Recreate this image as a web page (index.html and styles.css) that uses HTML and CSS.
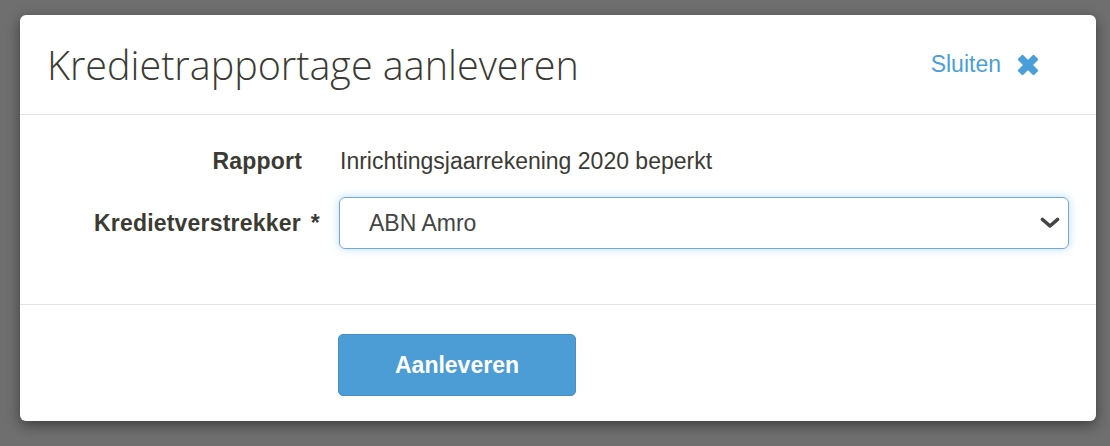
FILE: index.html
```html
<!DOCTYPE html>
<html lang="nl">
<head>
<meta charset="utf-8">
<title>Kredietrapportage aanleveren</title>
<link rel="stylesheet" href="styles.css">
</head>
<body>
<div class="modal">
  <header class="modal-header">
    <h1 class="modal-title">Kredietrapportage aanleveren</h1>
    <a class="close-link" href="#">Sluiten
      <svg class="close-icon" viewBox="0 0 26 26" width="26" height="26" aria-hidden="true">
        <path d="M4 7.5 L7.5 4 L13 9.5 L18.5 4 L22 7.5 L16.5 13 L22 18.5 L18.5 22 L13 16.5 L7.5 22 L4 18.5 L9.5 13 Z" fill="#4a9fd9" stroke="#4a9fd9" stroke-width="2.4" stroke-linejoin="round"/>
      </svg>
    </a>
  </header>
  <section class="modal-body">
    <div class="form-row row-static">
      <div class="label">Rapport</div>
      <div class="value">Inrichtingsjaarrekening 2020 beperkt</div>
    </div>
    <div class="form-row">
      <div class="label">Kredietverstrekker<span class="req">*</span></div>
      <div class="select">
        <span class="select-text">ABN Amro</span>
        <svg class="chevron" viewBox="0 0 20 12" width="20" height="12" aria-hidden="true">
          <path d="M2.5 2.5 L10 9 L17.5 2.5" fill="none" stroke="#444" stroke-width="3.6" stroke-linecap="round" stroke-linejoin="round"/>
        </svg>
      </div>
    </div>
  </section>
  <footer class="modal-footer">
    <button class="btn" type="button">Aanleveren</button>
  </footer>
</div>
</body>
</html>
```

FILE: styles.css
```css
html, body {
  margin: 0;
  padding: 0;
}
body {
  background: #6f6f6f;
  padding: 15px 14px 0 20px;
  height: 446px;
  box-sizing: border-box;
  overflow: hidden;
  font-family: "Liberation Sans", Arial, sans-serif;
}
.modal {
  width: 1076px;
  height: 406px;
  background: #fff;
  border-radius: 6px;
  box-shadow: 0 4px 14px rgba(0, 0, 0, 0.45);
  display: flex;
  flex-direction: column;
}
.modal-header {
  height: 99px;
  flex: none;
  border-bottom: 1px solid #e4e4e4;
  display: flex;
  align-items: center;
  justify-content: space-between;
  padding: 0 55px 0 27px;
}
.modal-title {
  margin: 0;
  font-family: "Open Sans", sans-serif;
  font-weight: 300;
  font-size: 39.5px;
  color: #3b3b34;
  letter-spacing: 0;
}
.close-link {
  display: flex;
  align-items: center;
  gap: 14px;
  color: #4a9fd9;
  font-size: 23px;
  text-decoration: none;
}
.close-icon {
  display: block;
}
.modal-body {
  height: 190px;
  flex: none;
  box-sizing: border-box;
  border-bottom: 1px solid #e4e4e4;
  padding: 32px 27px 0 0;
  display: flex;
  flex-direction: column;
  gap: 22px;
}
.form-row {
  display: grid;
  grid-template-columns: 282px 1fr;
  column-gap: 37px;
  align-items: center;
}
.row-static {
  height: 28px;
}
.label {
  text-align: right;
  font-weight: bold;
  font-size: 23px;
  color: #3b3b34;
  letter-spacing: 0.2px;
}
.req {
  margin-left: 10px;
  margin-right: -18px;
}
.value {
  font-size: 23px;
  color: #3b3b34;
  padding-left: 1px;
}
.select {
  height: 52px;
  box-sizing: border-box;
  border: 1.5px solid #70a8e4;
  border-radius: 6px;
  box-shadow: 0 0 8px rgba(102, 175, 233, 0.45);
  display: flex;
  align-items: center;
  justify-content: space-between;
  padding: 0 8px 0 29px;
}
.select-text {
  font-size: 23px;
  color: #444;
}
.chevron {
  display: block;
}
.modal-footer {
  flex: 1;
  padding: 29px 0 0 318px;
}
.btn {
  width: 238px;
  height: 62px;
  background: #4c9dd5;
  border: 1px solid #4490c7;
  border-radius: 5px;
  color: #fff;
  font-family: "Liberation Sans", Arial, sans-serif;
  font-weight: bold;
  font-size: 23px;
  padding: 0;
}
```
